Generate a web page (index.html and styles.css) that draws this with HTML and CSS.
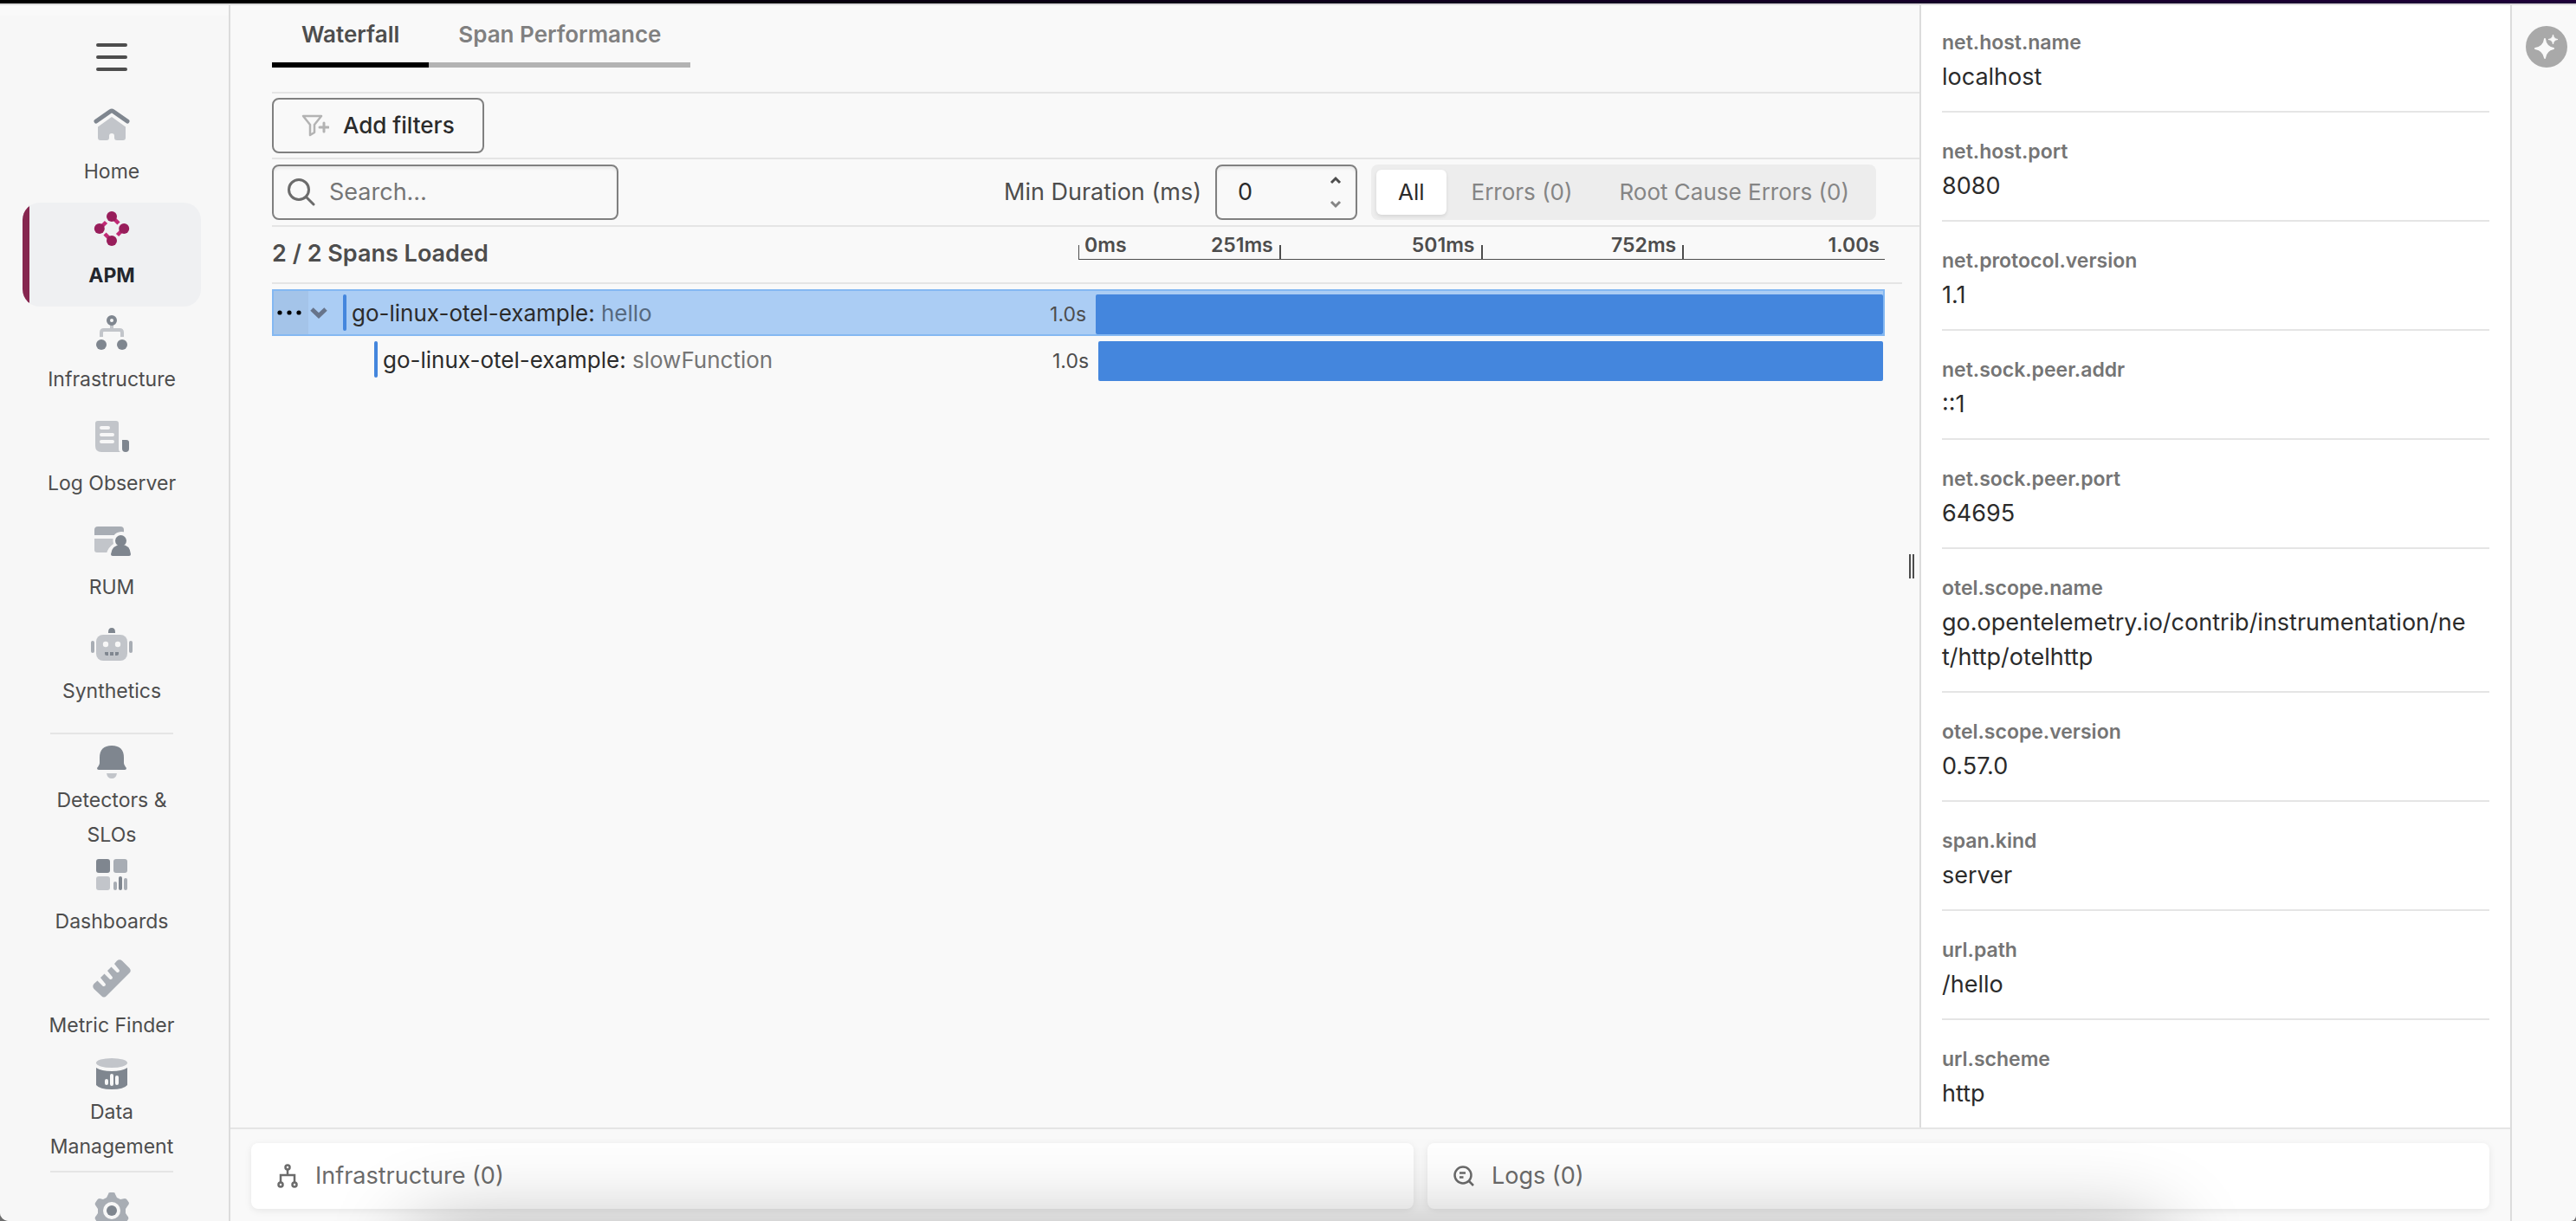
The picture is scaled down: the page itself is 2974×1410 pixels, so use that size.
FILE: index.html
```html
<!DOCTYPE html>
<html lang="en">
<head>
<meta charset="utf-8">
<title>Trace waterfall</title>
<link rel="stylesheet" href="styles.css">
</head>
<body>
<div class="app">
  <div class="topbar"></div>
  <div class="shell">
    <nav class="sidebar" aria-label="Main">
      <button class="menu" aria-label="Toggle menu"><svg width="36" height="32" viewBox="0 0 36 32" stroke="#4d4d4d" stroke-width="4" stroke-linecap="round"><path d="M2 2H34M2 16H34M2 30H34"/></svg></button>
      <a class="nav-item" href="#"><svg class="nav-icon" viewBox="0 0 44 44"><path d="M4 18 20.500 6.500Q22 5.500 23.500 6.500L40 18" fill="none" stroke="#7f868f" stroke-width="5" stroke-linecap="round"/><path d="M22 13 38 24.500V37Q38 40 35 40H28Q25 40 25 37V35Q25 32 22 32T19 35V37Q19 40 16 40H9Q6 40 6 37V24.500Z" fill="#c2c5ca"/></svg><span>Home</span></a>
      <a class="nav-item nav-active" href="#" aria-current="page"><svg class="nav-icon" viewBox="0 0 44 44"><path d="M10 20 15.500 14.500M24 10 30 16M34 24 28.500 29.500M20 34 14 28" fill="none" stroke="#c12a76" stroke-width="4.500"/><g fill="#981d5b"><circle cx="22" cy="8" r="6"/><circle cx="36.200" cy="22" r="6"/><circle cx="22" cy="36" r="6"/><circle cx="7.800" cy="22" r="6"/></g></svg><span>APM</span></a>
      <a class="nav-item" href="#"><svg class="nav-icon" viewBox="0 0 44 44"><path d="M22 12V19M10 27V22Q10 19 13 19H31Q34 19 34 22V27" fill="none" stroke="#c2c5ca" stroke-width="4"/><circle cx="22" cy="8" r="4" fill="none" stroke="#7f868f" stroke-width="4"/><circle cx="10" cy="36" r="6" fill="#7f868f"/><circle cx="34" cy="36" r="6" fill="#7f868f"/></svg><span>Infrastructure</span></a>
      <a class="nav-item" href="#"><svg class="nav-icon" viewBox="0 0 44 44"><path d="M6 4H27Q30 4 30 7V36Q30 40 33 40H10Q3 40 3 33V7Q3 4 6 4Z" fill="#c2c5ca"/><path d="M10 12H18M10 20H23M10 28H23" stroke="#f7f7f7" stroke-width="4" stroke-linecap="round"/><path d="M34 26H39Q42 26 42 29V36Q42 40 38 40T34 36Z" fill="#7f868f"/></svg><span>Log Observer</span></a>
      <a class="nav-item" href="#"><svg class="nav-icon" viewBox="0 0 44 44"><path d="M2 16V10Q2 6 6 6H32Q36 6 36 10V16Z" fill="#a8adb4"/><path d="M2 20H27V36H5Q2 36 2 33Z" fill="#c2c5ca"/><path d="M16 37Q18 30 24 26Q21 13 33 12Q44 12 44 22L40 37Z" fill="#f7f7f7"/><circle cx="32.500" cy="22.500" r="6.500" fill="#7f868f"/><path d="M21 38Q22 27.500 32.500 27T44 38Q44 40 42 40H23Q21 40 21 38Z" fill="#7f868f"/></svg><span>RUM</span></a>
      <a class="nav-item" href="#"><svg class="nav-icon nav-icon-wide" viewBox="0 0 48 44"><path d="M20 8Q20 3 24 3T28 8V9H20Z" fill="#7f868f"/><rect y="18" width="4" height="14" rx="2" fill="#a8adb4"/><rect x="44" y="18" width="4" height="14" rx="2" fill="#a8adb4"/><rect x="6" y="11" width="36" height="30" rx="8" fill="#c2c5ca"/><circle cx="17" cy="22" r="3.200" fill="#f7f7f7"/><circle cx="31" cy="22" r="3.200" fill="#f7f7f7"/><path d="M16 31H20V35H18Q16 35 16 33ZM22 31H26V35H22ZM28 31H32V33Q32 35 30 35H28Z" fill="#7f868f"/></svg><span>Synthetics</span></a>
      <hr class="nav-rule">
      <a class="nav-item nav-detectors" href="#"><svg class="nav-icon" viewBox="0 0 44 44"><path d="M8 17Q8 3 22 3T36 17V23Q36 25 39 29Q39 31 37 31H7Q5 31 5 29Q8 25 8 23Z" fill="#7f868f"/><path d="M16 35H28Q27 41 22 41T16 35Z" fill="#c2c5ca"/></svg><span>Detectors &amp; SLOs</span></a>
      <a class="nav-item" href="#"><svg class="nav-icon" viewBox="0 0 44 44"><rect x="4" y="4" width="16" height="16" rx="3" fill="#7f868f"/><rect x="24" y="4" width="16" height="16" rx="3" fill="#a8adb4"/><rect x="4" y="24" width="16" height="16" rx="3" fill="#c2c5ca"/><rect x="24" y="30" width="4" height="10" rx="2" fill="#a8adb4"/><rect x="30" y="24" width="4" height="16" rx="2" fill="#7f868f"/><rect x="36" y="26" width="4" height="14" rx="2" fill="#a8adb4"/></svg><span>Dashboards</span></a>
      <a class="nav-item" href="#"><svg class="nav-icon" viewBox="0 0 44 44"><path d="M28 1.500Q31 -1 34 1.500L42.500 10Q45 13 42.500 15.500L16 42Q13 45 10 42L1.500 34Q-1 31 1.500 28L5.500 24.500 12 31Q15 31.500 15 28.500L9 21 13.500 16.500 20 23Q23 23.500 23 20.500L17 13 21.500 8.500 28 15Q31 15.500 31 12.500L25 5Z" fill="#a8adb4"/></svg><span>Metric Finder</span></a>
      <a class="nav-item nav-data" href="#"><svg class="nav-icon" viewBox="0 0 44 44"><ellipse cx="22" cy="9.500" rx="18" ry="5.500" fill="#c2c5ca"/><path d="M4 15Q10 19 22 19T40 15V35Q36 40 22 40T4 35Z" fill="#7f868f"/><path d="M16 30V33M22 24V34M28 26V33" stroke="#f7f7f7" stroke-width="4" stroke-linecap="round"/></svg><span>Data Management</span></a>
      <hr class="nav-rule">
      <a class="nav-item nav-settings" href="#" aria-label="Settings"><svg class="nav-icon" viewBox="0 0 44 44"><path d="M18 3Q18 1 20 1H24Q26 1 26 3L28 7 32 9 37 8Q39 8 40 10L42 13Q42 15 40 17L38 20V25L40 28Q42 30 41 32L39 35Q38 37 35 36L31 35 28 38 26 42Q26 43 24 43H20Q18 43 18 42L16 38 12 35 8 36Q6 37 5 35L3 32Q2 30 4 28L6 25V20L4 17Q2 15 3 13L5 10Q6 8 8 8L12 9 16 7Z" fill="#a8adb4"/><circle cx="22" cy="22" r="10" fill="#f7f7f7"/><circle cx="22" cy="22" r="6" fill="#7f868f"/></svg></a>
    </nav>

    <div class="content">
      <div class="columns">
        <main class="main">
          <div class="tabs" role="tablist">
            <button class="tab tab-active" role="tab" aria-selected="true">Waterfall</button>
            <button class="tab" role="tab" aria-selected="false">Span Performance</button>
          </div>
          <div class="filters">
            <button class="add-filters"><svg width="32" height="26" viewBox="0 0 32 26" fill="none" stroke="#b3b3b3" stroke-width="2.500" stroke-linejoin="round" stroke-linecap="round"><path d="M2 2H23L15 12V21L10 24V12Z"/><path d="M26 10V20M21 15H31" stroke-width="3"/></svg>Add filters</button>
          </div>
          <div class="toolbar">
            <label class="search"><svg width="32" height="32" viewBox="0 0 32 32" fill="none" stroke="#6b6b6b" stroke-width="3" stroke-linecap="round"><circle cx="13" cy="13" r="11.500"/><path d="M21.500 21.500 30 30"/></svg><input type="search" placeholder="Search…" aria-label="Search spans"></label>
            <label class="duration-label" for="min-duration">Min Duration (ms)</label>
            <span class="number"><input id="min-duration" type="number" value="0"><span class="steppers"><svg width="14" height="10" viewBox="0 0 14 10" fill="none" stroke="#4d4d4d" stroke-width="3"><path d="M2 8 7 3 12 8"/></svg><svg width="14" height="10" viewBox="0 0 14 10" fill="none" stroke="#858585" stroke-width="3"><path d="M2 2 7 7 12 2"/></svg></span></span>
            <div class="segments">
              <button class="segment segment-active">All</button>
              <button class="segment">Errors (0)</button>
              <button class="segment">Root Cause Errors (0)</button>
            </div>
          </div>
          <div class="waterfall-head">
            <h2 class="span-count">2 / 2 Spans Loaded</h2>
            <div class="axis"><span class="tick tick-first">0ms</span><span class="tick">251ms</span><span class="tick">501ms</span><span class="tick">752ms</span><span class="tick">1.00s</span></div>
          </div>
          <div class="rows">
            <div class="row row-selected">
              <button class="more" aria-label="More actions"><svg width="28" height="6" viewBox="0 0 28 6"><circle cx="3" cy="3" r="2.600"/><circle cx="14" cy="3" r="2.600"/><circle cx="25" cy="3" r="2.600"/></svg></button>
              <button class="toggle" aria-label="Collapse"><svg width="20" height="14" viewBox="0 0 20 14" fill="none" stroke="#67748a" stroke-width="5"><path d="M2 3 10 10.500 18 3"/></svg></button>
              <span class="marker"></span>
              <span class="name">go-linux-otel-example: <span class="operation">hello</span></span>
              <span class="time">1.0s</span>
              <span class="bar" style="width:48.92%"></span>
            </div>
            <div class="row row-child">
              <span class="marker"></span>
              <span class="name">go-linux-otel-example: <span class="operation">slowFunction</span></span>
              <span class="time">1.0s</span>
              <span class="bar" style="width:48.76%"></span>
            </div>
          </div>
          <div class="splitter"></div>
        </main>
        <aside class="details">
          <dl class="tags">
            <div class="tag"><dt>net.host.name</dt><dd>localhost</dd></div>
            <div class="tag"><dt>net.host.port</dt><dd>8080</dd></div>
            <div class="tag"><dt>net.protocol.version</dt><dd>1.1</dd></div>
            <div class="tag"><dt>net.sock.peer.addr</dt><dd>::1</dd></div>
            <div class="tag"><dt>net.sock.peer.port</dt><dd>64695</dd></div>
            <div class="tag"><dt>otel.scope.name</dt><dd>go.opentelemetry.io/contrib/instrumentation/net/http/otelhttp</dd></div>
            <div class="tag"><dt>otel.scope.version</dt><dd>0.57.0</dd></div>
            <div class="tag"><dt>span.kind</dt><dd>server</dd></div>
            <div class="tag"><dt>url.path</dt><dd>/hello</dd></div>
            <div class="tag"><dt>url.scheme</dt><dd>http</dd></div>
          </dl>
        </aside>
      </div>
      <footer class="related">
        <a class="card card-infra" href="#"><svg width="24" height="28" viewBox="0 0 24 28" fill="none" stroke="#6b6b6b" stroke-width="2.500"><circle cx="12" cy="4" r="2.500"/><circle cx="4" cy="24" r="2.500"/><circle cx="20" cy="24" r="2.500"/><path d="M12 6.500V13M4 21.500V13H20V21.500"/></svg>Infrastructure (0)</a>
        <a class="card card-logs" href="#"><svg width="24" height="24" viewBox="0 0 24 24" fill="none" stroke="#6b6b6b" stroke-width="2.500"><circle cx="11" cy="11" r="9.500"/><path d="M17.500 17.500 23 23M7 8.500H14M7 13.500H11.500"/></svg>Logs (0)</a>
      </footer>
    </div>

    <div class="rail">
      <button class="assistant" aria-label="AI assistant"><svg width="28" height="28" viewBox="0 0 28 28" fill="#f9f9f9"><path d="M12 5Q13 14 22 16Q13 18 12 27Q11 18 1 16Q11 14 12 5Z" stroke="#f9f9f9" stroke-width="2" stroke-linejoin="round"/><path d="M21.500 0Q22 5 27 5.500Q22 6 21.500 11Q21 6 16 5.500Q21 5 21.500 0Z" stroke="#f9f9f9"/></svg></button>
    </div>
  </div>
</div>
</body>
</html>
```
FILE: styles.css
```css
*, *::before, *::after { box-sizing: border-box; }

html { background: #6e6e6e; }

body {
  margin: 0;
  font: 400 27px/40px Inter, "Liberation Sans", sans-serif;
  color: #2b2b2b;
}

button, input { font: inherit; color: inherit; margin: 0; padding: 0; border: 0; background: none; }
a { color: inherit; text-decoration: none; }
svg { display: block; flex: none; }

.app {
  display: flex;
  flex-direction: column;
  height: 100vh;
  overflow: hidden;
  background: #f9f9f9;
  border-radius: 0 0 6px 10px;
}

/* shadow cast upwards by whatever sits under the window */
.app::after {
  content: "";
  position: fixed;
  top: calc(100% + 20px);
  left: 490px;
  right: 490px;
  height: 100px;
  box-shadow: 0 0 100px 10px rgba(0, 0, 0, 0.32);
  pointer-events: none;
}

.topbar {
  flex: none;
  height: 6px;
  border-bottom: 2px solid #dcdcdc;
  background: linear-gradient(90deg, #000 10%, #1d0038);
}

.shell { display: flex; flex: 1; min-height: 0; }

/* sidebar */
.sidebar {
  flex: none;
  display: flex;
  flex-direction: column;
  width: 266px;
  padding: 0 32px 0 26px;
  overflow: hidden;
  border-right: 2px solid #dcdcdc;
  background: linear-gradient(#f9f9f9 12px, #f7f7f7 12px);
  font-size: 23px;
  color: #4d4d4d;
}

.menu {
  flex: none;
  display: flex;
  justify-content: center;
  align-items: flex-start;
  height: 108px;
  padding-top: 44px;
}

.nav-item {
  flex: none;
  display: flex;
  flex-direction: column;
  align-items: center;
  gap: 12px;
  height: 120px;
  padding: 8px 24px 0;
  text-align: center;
}

.nav-icon { width: 44px; height: 44px; }
.nav-icon-wide { width: 48px; }

.nav-active {
  border-radius: 20px;
  background: linear-gradient(90deg, #86264f 8px, #eff0f2 8px);
  font-weight: 700;
  color: #23262d;
}

.nav-rule { flex: none; width: 142px; margin: 12px auto 0; border: 0; border-top: 2px solid #e5e5e5; }
.nav-detectors { gap: 2px; padding-top: 10px; height: 132px; }
.nav-data { gap: 2px; margin-top: -2px; padding-top: 0; height: 122px; }
.nav-settings { padding-top: 22px; }

/* layout columns */
.content { flex: 1; min-width: 0; display: flex; flex-direction: column; }
.columns { flex: 1; min-height: 0; display: flex; }

.main { position: relative; flex: 1; min-width: 0; padding-left: 48px; }

.splitter {
  position: absolute;
  top: 634px;
  right: 6px;
  width: 6px;
  height: 28px;
  border: solid #4d4d4d;
  border-width: 0 2px;
}

.tabs { display: flex; margin-bottom: 28px; }
.tab {
  height: 72px;
  padding: 2px 34px 0;
  border-bottom: 6px solid #b3b3b3;
  font-size: 26px;
  font-weight: 600;
  color: #808080;
}
.tab-active { border-color: #000; color: #4d4d4d; }

.filters { padding: 5px 0; border-top: 2px solid #e5e5e5; }
.add-filters {
  display: flex;
  align-items: center;
  gap: 16px;
  height: 64px;
  padding: 0 32px;
  border: 2px solid #808080;
  border-radius: 8px;
  font-size: 26px;
  font-weight: 500;
}

.toolbar {
  display: flex;
  align-items: center;
  padding: 6px 50px 6px 0;
  border: solid #e5e5e5;
  border-width: 2px 0;
}

.search, .number {
  display: flex;
  align-items: center;
  height: 64px;
  border: 2px solid #808080;
  border-radius: 8px;
  box-shadow: inset 0 3px 3px rgba(0, 0, 0, 0.06);
}
.search { width: 400px; gap: 16px; padding: 0 16px; margin-right: auto; }
.search input { flex: 1; min-width: 0; outline: 0; }
.search input::placeholder { color: #757575; opacity: 1; }

.duration-label { margin-right: 16px; color: #4d4d4d; }
.number { width: 164px; margin-right: 16px; padding: 0 16px 0 24px; }
.number input { flex: 1; min-width: 0; appearance: textfield; -moz-appearance: textfield; outline: 0; }
.number input::-webkit-inner-spin-button { appearance: none; margin: 0; }
.steppers { display: flex; flex-direction: column; gap: 18px; }

.segments { display: flex; gap: 4px; padding: 6px; border-radius: 8px; background: #ededed; }
.segment { height: 52px; padding: 0 25px; border-radius: 6px; font-size: 26px; color: #858585; }
.segment-active { background: #fff; color: #2b2b2b; box-shadow: 0 2px 4px rgba(0, 0, 0, 0.1); }

.waterfall-head {
  display: flex;
  align-items: center;
  height: 66px;
  margin-right: 20px;
  padding: 0 20px 2px 0;
  border-bottom: 2px solid #e5e5e5;
}
.span-count { flex: 1; margin: 0; font-size: inherit; font-weight: 600; color: #4d4d4d; }

.axis {
  position: relative;
  flex: 1;
  display: grid;
  grid-template-columns: repeat(4, 1fr);
  height: 32px;
  margin-bottom: 18px;
  border-bottom: 1px solid #4d4d4d;
  font-size: 23px;
  line-height: 30px;
  font-weight: 600;
  color: #4d4d4d;
}
.tick { grid-row: 1; position: relative; padding-right: 8px; text-align: right; }
.tick::after { content: ""; position: absolute; right: -1px; bottom: 0; width: 2px; height: 16px; background: #4d4d4d; }
.tick:last-child { padding-right: 6px; }
.tick:last-child::after { display: none; }
.tick-first { grid-column: 1; padding-left: 7px; text-align: left; }
.tick-first::after { right: auto; left: 0; width: 1px; }
.tick:nth-child(2) { grid-column: 1; }

.rows { padding: 6px 40px 0 0; }
.row { display: flex; height: 54px; border: 2px solid transparent; }
.row-selected { border-color: #84b8f2; background: #abcdf4; }
.more { width: 40px; padding-right: 4px; display: grid; place-items: center; background: #a4c4e9; }
.toggle { width: 40px; padding-right: 16px; display: grid; place-items: center; }
.marker { flex: none; width: 4px; margin: 4px 0; border-radius: 2px; background: #4486dd; }
.row-child .marker { margin-left: 116px; }
.name { flex: 1; min-width: 0; padding-left: 6px; font-size: 26px; line-height: 52px; white-space: nowrap; }
.operation { color: #757575; }
.row-selected .operation { color: #56697f; }
.time { padding-right: 11px; font-size: 23px; line-height: 54px; color: #4d4d4d; }
.bar { flex: none; margin-top: 4px; border-radius: 2px; background: #4486dd; }

/* tag panel */
.details { flex: none; width: 682px; padding: 0 24px; overflow: hidden; border-left: 2px solid #dcdcdc; background: #fff; }
.tags { margin: 0; }
.tag { padding: 25px 0 19px; border-bottom: 2px solid #e5e5e5; }
.tag:first-child { padding-top: 23px; }
.tag:last-child { border-bottom: 0; }
.tag dt { font-size: 23px; font-weight: 600; color: #757575; }
.tag dd { margin: 0; padding-right: 24px; word-break: break-all; }

/* related content */
.related { display: flex; gap: 16px; padding: 16px 24px 14px; border-top: 2px solid #e5e5e5; }
.card {
  flex: 1282;
  display: flex;
  align-items: center;
  gap: 20px;
  height: 76px;
  padding: 0 30px;
  border-radius: 8px;
  background: #fff;
  box-shadow: 0 2px 8px rgba(0, 0, 0, 0.08);
  color: #6b6b6b;
}
.card-logs { flex-grow: 1166; }

.rail { flex: none; width: 76px; padding: 24px 10px 0 16px; border-left: 2px solid #dcdcdc; }
.assistant { display: grid; place-items: center; width: 48px; height: 48px; border-radius: 50%; background: #a9a9a9; }
```
